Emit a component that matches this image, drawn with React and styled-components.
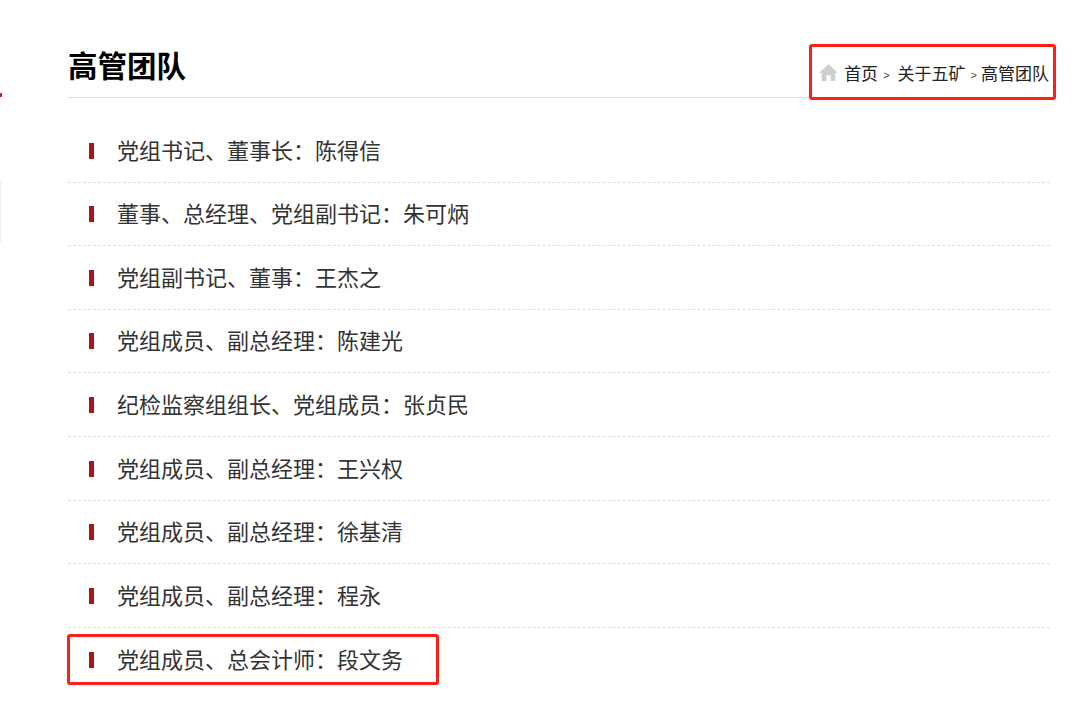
import React from 'react';
import styled, { createGlobalStyle } from 'styled-components';

const GlobalStyle = createGlobalStyle`
  html, body {
    margin: 0;
    padding: 0;
    background: #fff;
  }
  body {
    font-family: "Noto Sans CJK SC", "Liberation Sans", sans-serif;
  }
`;

const Page = styled.div`
  position: relative;
  box-sizing: border-box;
  width: 1080px;
  height: 713px;
  overflow: hidden;
  padding: 0 30px 0 68px;
`;

const Header = styled.div`
  position: relative;
  display: flex;
  align-items: flex-end;
  justify-content: space-between;
  height: 98px;
  box-sizing: border-box;
  border-bottom: 1px solid #dcdcdc;
`;

const Title = styled.h1`
  margin: 0 0 11px;
  font-size: 29.5px;
  line-height: 44px;
  font-weight: 700;
  color: #000;
`;

const Breadcrumb = styled.div`
  display: flex;
  align-items: center;
  height: 24px;
  margin: 0 1px 13px 0;
  font-size: 17px;
  color: #222;
  white-space: nowrap;
`;

const Arrow = styled.span`
  font-size: 11px;
  font-family: "Liberation Sans", sans-serif;
  color: #444;
  margin: 5px ${(p) => p.$after}px 0 ${(p) => p.$before}px;
`;

const HomeIcon = styled.svg`
  width: 19px;
  height: 19px;
  margin: 0 6px 0 -1px;
  fill: #cfcfcf;
`;

const List = styled.ul`
  list-style: none;
  margin: 21.6px 0 0;
  padding: 0;
`;

const Row = styled.li`
  display: flex;
  align-items: center;
  box-sizing: border-box;
  height: 63.6px;
  padding: 0 0 3.4px 20px;
  font-size: 22px;
  color: #333;
  border-bottom: ${(p) => (p.$last ? 'none' : '1px dashed #dedede')};
  &:first-child {
    height: 63px;
  }
`;

const Marker = styled.i`
  flex: none;
  width: 5px;
  height: 16px;
  margin: 4px 23px 0 1px;
  background: #a71717;
`;

const Highlight = styled.div`
  position: absolute;
  box-sizing: border-box;
  left: ${(p) => p.$x}px;
  top: ${(p) => p.$y}px;
  width: ${(p) => p.$w}px;
  height: ${(p) => p.$h}px;
  border: 3px solid #ff1f17;
  border-radius: 3px;
`;

const EdgeDot = styled.div`
  position: absolute;
  left: 0;
  top: 93px;
  width: 2px;
  height: 4px;
  background: #c2274a;
`;

const EdgeLine = styled.div`
  position: absolute;
  left: 0;
  top: 180px;
  width: 1px;
  height: 63px;
  background: #f1f1f1;
`;

const people = [
  '党组书记、董事长\uFF1A陈得信',
  '董事、总经理、党组副书记\uFF1A朱可炳',
  '党组副书记、董事\uFF1A王杰之',
  '党组成员、副总经理\uFF1A陈建光',
  '纪检监察组组长、党组成员\uFF1A张贞民',
  '党组成员、副总经理\uFF1A王兴权',
  '党组成员、副总经理\uFF1A徐基清',
  '党组成员、副总经理\uFF1A程永',
  '党组成员、总会计师\uFF1A段文务',
];

export default function App() {
  return (
    <>
      <GlobalStyle />
      <Page>
        <EdgeDot />
        <EdgeLine />
        <Header>
          <Title>高管团队</Title>
          <Breadcrumb>
            <HomeIcon viewBox="0 0 18 18">
              <path d="M9 1 L18 9.5 L15.5 9.5 L15.5 17 L11 17 L11 11.5 L7 11.5 L7 17 L2.5 17 L2.5 9.5 L0 9.5 Z" />
            </HomeIcon>
            首页
            <Arrow $before={5} $after={8}>&gt;</Arrow>
            关于五矿
            <Arrow $before={5} $after={4}>&gt;</Arrow>
            高管团队
          </Breadcrumb>
        </Header>
        <List>
          {people.map((text, i) => (
            <Row key={text} $last={i === people.length - 1}>
              <Marker />
              <span>{text}</span>
            </Row>
          ))}
        </List>
        <Highlight $x={809} $y={44} $w={247} $h={56} />
        <Highlight $x={67} $y={634} $w={372} $h={51} />
      </Page>
    </>
  );
}
